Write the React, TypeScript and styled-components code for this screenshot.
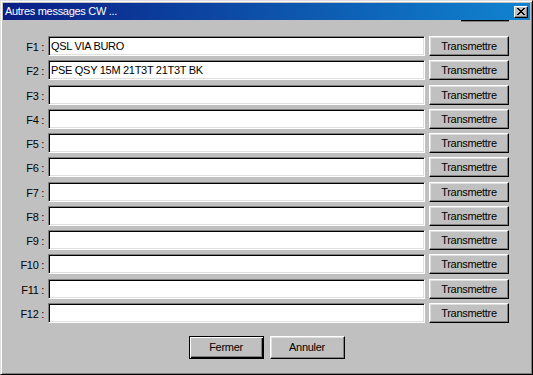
import styled, { createGlobalStyle } from "styled-components"

const GlobalStyle = createGlobalStyle`
  html, body {
    margin: 0;
    padding: 0;
    background: #c0c0c0;
  }
  * {
    box-sizing: border-box;
  }
`

const messages = [
  "QSL VIA BURO",
  "PSE QSY 15M 21T3T 21T3T BK",
  "",
  "",
  "",
  "",
  "",
  "",
  "",
  "",
  "",
  "",
]

const App = () => {
  return (
    <>
      <GlobalStyle />
      <Window>
        <TitleBar>
          <TitleText>Autres messages CW ...</TitleText>
          <CloseButton>
            <svg width="8" height="7" viewBox="0 0 8 7">
              <path
                d="M0 0h2v1h1v1h2v-1h1v-1h2v1h-1v1h-1v1h-1v1h1v1h1v1h1v1h-2v-1h-1v-1h-2v1h-1v1h-2v-1h1v-1h1v-1h1v-1h-1v-1h-1v-1h-1z"
                fill="#000"
              />
            </svg>
          </CloseButton>
        </TitleBar>
        <Body>
          <TopStrip>
            <HiddenEdge />
          </TopStrip>
          <Rows>
            {messages.map((msg, i) => (
              <Row key={i}>
                <Label>F{i + 1} :</Label>
                <MessageInput defaultValue={msg} />
                <Button>Transmettre</Button>
              </Row>
            ))}
          </Rows>
          <Footer>
            <Button $wide $default>Fermer</Button>
            <Button $wide>Annuler</Button>
          </Footer>
        </Body>
      </Window>
    </>
  )
}

export default App

const Window = styled.div`
  width: 533px;
  height: 375px;
  display: flex;
  flex-direction: column;
  padding: 2px;
  background: #c0c0c0;
  border: 1px solid;
  border-color: #dfdfdf #000 #000 #dfdfdf;
  box-shadow: inset 1px 1px #fff, inset -1px -1px #808080;
  font-family: "Liberation Sans", Arial, sans-serif;
  font-size: 11px;
  letter-spacing: -0.3px;
  color: #000;
  user-select: none;
`

const TitleBar = styled.div`
  height: 17px;
  display: flex;
  align-items: center;
  justify-content: space-between;
  padding: 0 2px 0 2px;
  background: linear-gradient(90deg, #0a1e84 0%, #1084d0 100%);
`

const TitleText = styled.div`
  color: #fff;
  font-size: 11px;
  line-height: 17px;
  white-space: nowrap;
`

const CloseButton = styled.div`
  width: 14px;
  height: 12px;
  display: flex;
  align-items: center;
  justify-content: center;
  background: #c0c0c0;
  border: 1px solid;
  border-color: #fff #000 #000 #fff;
  box-shadow: inset -1px -1px #808080;
`

const Body = styled.div`
  flex: 1;
  display: flex;
  flex-direction: column;
`

const TopStrip = styled.div`
  display: flex;
  justify-content: flex-end;
  padding-right: 21px;
`

const HiddenEdge = styled.div`
  width: 48px;
  height: 2px;
  border-bottom: 1px solid #808080;
  border-top: 1px solid #000;
`

const Rows = styled.div`
  display: flex;
  flex-direction: column;
  gap: 4.27px;
  margin-top: 14px;
`

const Row = styled.div`
  display: flex;
  align-items: center;
  height: 20px;
`

const Label = styled.div`
  width: 41px;
  text-align: right;
  padding-top: 2px;
  margin-right: 4px;
  white-space: nowrap;
`

const MessageInput = styled.input`
  width: 377px;
  height: 20px;
  margin: 0 4px 0 0;
  padding: 0 2px;
  background: #fff;
  border: 1px solid;
  border-color: #808080 #fff #fff #808080;
  box-shadow: inset 1px 1px #000, inset -1px -1px #dfdfdf;
  font-family: inherit;
  font-size: 11px;
  letter-spacing: -0.3px;
  color: #000;
  outline: none;
`

const Button = styled.div<{ $wide?: boolean; $default?: boolean }>`
  width: ${(p) => (p.$wide ? "75px" : "80px")};
  height: ${(p) => (p.$wide ? "23px" : "20px")};
  display: flex;
  align-items: center;
  justify-content: center;
  background: #c0c0c0;
  border: 1px solid;
  border-color: ${(p) => (p.$default ? "#000" : "#fff #000 #000 #fff")};
  box-shadow: ${(p) =>
    p.$default
      ? "inset 1px 1px #fff, inset -1px -1px #000, inset -2px -2px #808080"
      : "inset -1px -1px #808080, inset 1px 1px #dfdfdf"};
  white-space: nowrap;
`

const Footer = styled.div`
  display: flex;
  justify-content: center;
  gap: 6px;
  margin-top: 13px;
`
